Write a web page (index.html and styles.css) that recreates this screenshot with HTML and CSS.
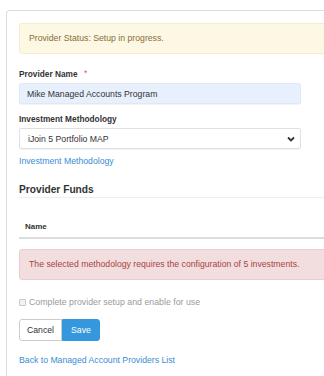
FILE: index.html
```html
<!DOCTYPE html>
<html lang="en">
<head>
  <meta charset="UTF-8" />
  <title>Managed Account Provider</title>
  <link rel="stylesheet" href="styles.css">
</head>
<body>
  <div class="card">
    <div class="alert alert-warning">
      Provider Status: Setup in progress.
    </div>

    <div class="form-group">
      <label class="control-label" for="provider-name">Provider Name <span class="required">*</span></label>
      <input id="provider-name" class="form-control filled" type="text" value="Mike Managed Accounts Program" />
    </div>

    <div class="form-group">
      <label class="control-label" for="methodology">Investment Methodology</label>
      <div class="select-wrap">
        <select id="methodology" class="form-control">
          <option>iJoin 5 Portfolio MAP</option>
        </select>
        <svg class="chevron" width="8" height="6" viewBox="0 0 8 6">
          <polyline points="1,1.5 4,4.5 7,1.5" fill="none" stroke="#333" stroke-width="1.8"/>
        </svg>
      </div>
      <a class="link method-link" href="#">Investment Methodology</a>
    </div>

    <h3 class="section-title">Provider Funds</h3>

    <table class="funds">
      <thead>
        <tr><th>Name</th></tr>
      </thead>
    </table>

    <div class="alert alert-danger">
      The selected methodology requires the configuration of 5 investments.
    </div>

    <label class="checkbox disabled">
      <input type="checkbox" disabled />
      Complete provider setup and enable for use
    </label>

    <div class="btn-group">
      <button class="btn btn-default">Cancel</button>
      <button class="btn btn-primary">Save</button>
    </div>

    <a class="link back-link" href="#">Back to Managed Account Providers List</a>
  </div>
</body>
</html>
```

FILE: styles.css
```css
:root {
  --text: #333;
  --link: #3a8dd3;
  --primary: #3598dc;
  --font-body: 'Liberation Sans', Arial, sans-serif;
}

html, body {
  overflow: hidden;
}

body {
  margin: 0;
  background: #fff;
  font-family: var(--font-body);
  font-size: 8.7px;
  line-height: 11px;
  color: var(--text);
}

.card {
  box-sizing: border-box;
  width: 340px;
  height: 366px;
  margin: 10px 0 0 6px;
  padding: 12px 12px 0;
  border: 1px solid #d9dde2;
  border-bottom: none;
  border-radius: 4px 0 0 0;
}

.alert {
  padding: 9px 9px;
  border: 1px solid transparent;
  border-radius: 3px;
}

.alert-warning {
  background: #fcf8e3;
  border-color: #f7ecca;
  color: #8a6d3b;
}

.alert-danger {
  margin-top: 10px;
  background: #f2dede;
  border-color: #ebccd1;
  color: #a94442;
}

.form-group {
  width: 282px;
  margin-bottom: 10px;
}

.alert-warning + .form-group {
  margin-top: 14px;
}

.control-label {
  display: block;
  margin-bottom: 3px;
  font-size: 8.3px;
  font-weight: bold;
}

.required {
  margin-left: 4px;
  color: #e05a5a;
  font-weight: normal;
  vertical-align: 1px;
}

.form-control {
  display: block;
  box-sizing: border-box;
  width: 100%;
  height: 21px;
  margin: 0;
  padding: 0 7px;
  font-family: var(--font-body);
  font-size: 8.7px;
  color: var(--text);
  background: #fff;
  border: 1px solid #dde1e6;
  border-radius: 2px;
  box-shadow: 0 1px 1px rgba(0, 0, 0, 0.05);
  outline: none;
}

.form-control.filled {
  background: #e8f0fe;
  border-color: #e1e8f3;
}

.select-wrap {
  position: relative;
}

select.form-control {
  padding-left: 8px;
  appearance: none;
  -webkit-appearance: none;
}

.chevron {
  position: absolute;
  right: 6px;
  top: 8px;
}

.link {
  color: var(--link);
  text-decoration: none;
}

.method-link {
  display: block;
  margin-top: 7px;
}

.section-title {
  margin: 16px 0 0;
  padding-bottom: 1px;
  font-size: 10.2px;
  line-height: 13px;
  font-weight: bold;
  color: #333;
  border-bottom: 1px solid #eee;
}

.funds {
  width: 100%;
  margin-top: 15px;
  border-collapse: collapse;
}

.funds th {
  padding: 8px 6px 5px;
  text-align: left;
  font-size: 8px;
  font-weight: bold;
  border-bottom: 2px solid #ddd;
}

.checkbox {
  display: flex;
  align-items: center;
  margin-top: 17px;
  font-size: 8.8px;
}

.checkbox.disabled {
  color: #9a9a9a;
}

.checkbox input {
  appearance: none;
  -webkit-appearance: none;
  box-sizing: border-box;
  width: 7px;
  height: 7px;
  margin: 0 3px 0 0;
  border: 1px solid #c9c9c9;
  border-radius: 1px;
  background: #f2f2f2;
}

.btn-group {
  display: flex;
  margin-top: 11px;
}

.btn {
  height: 22px;
  padding: 0 7px;
  font-family: var(--font-body);
  font-size: 8.7px;
  border: 1px solid #ccc;
  cursor: pointer;
}

.btn-default {
  background: #fff;
  color: #333;
  border-radius: 3px 0 0 3px;
}

.btn-primary {
  padding: 0 8px;
  background: var(--primary);
  border-color: var(--primary);
  color: #fff;
  border-radius: 0 3px 3px 0;
}

.back-link {
  display: block;
  margin-top: 14px;
}
```
